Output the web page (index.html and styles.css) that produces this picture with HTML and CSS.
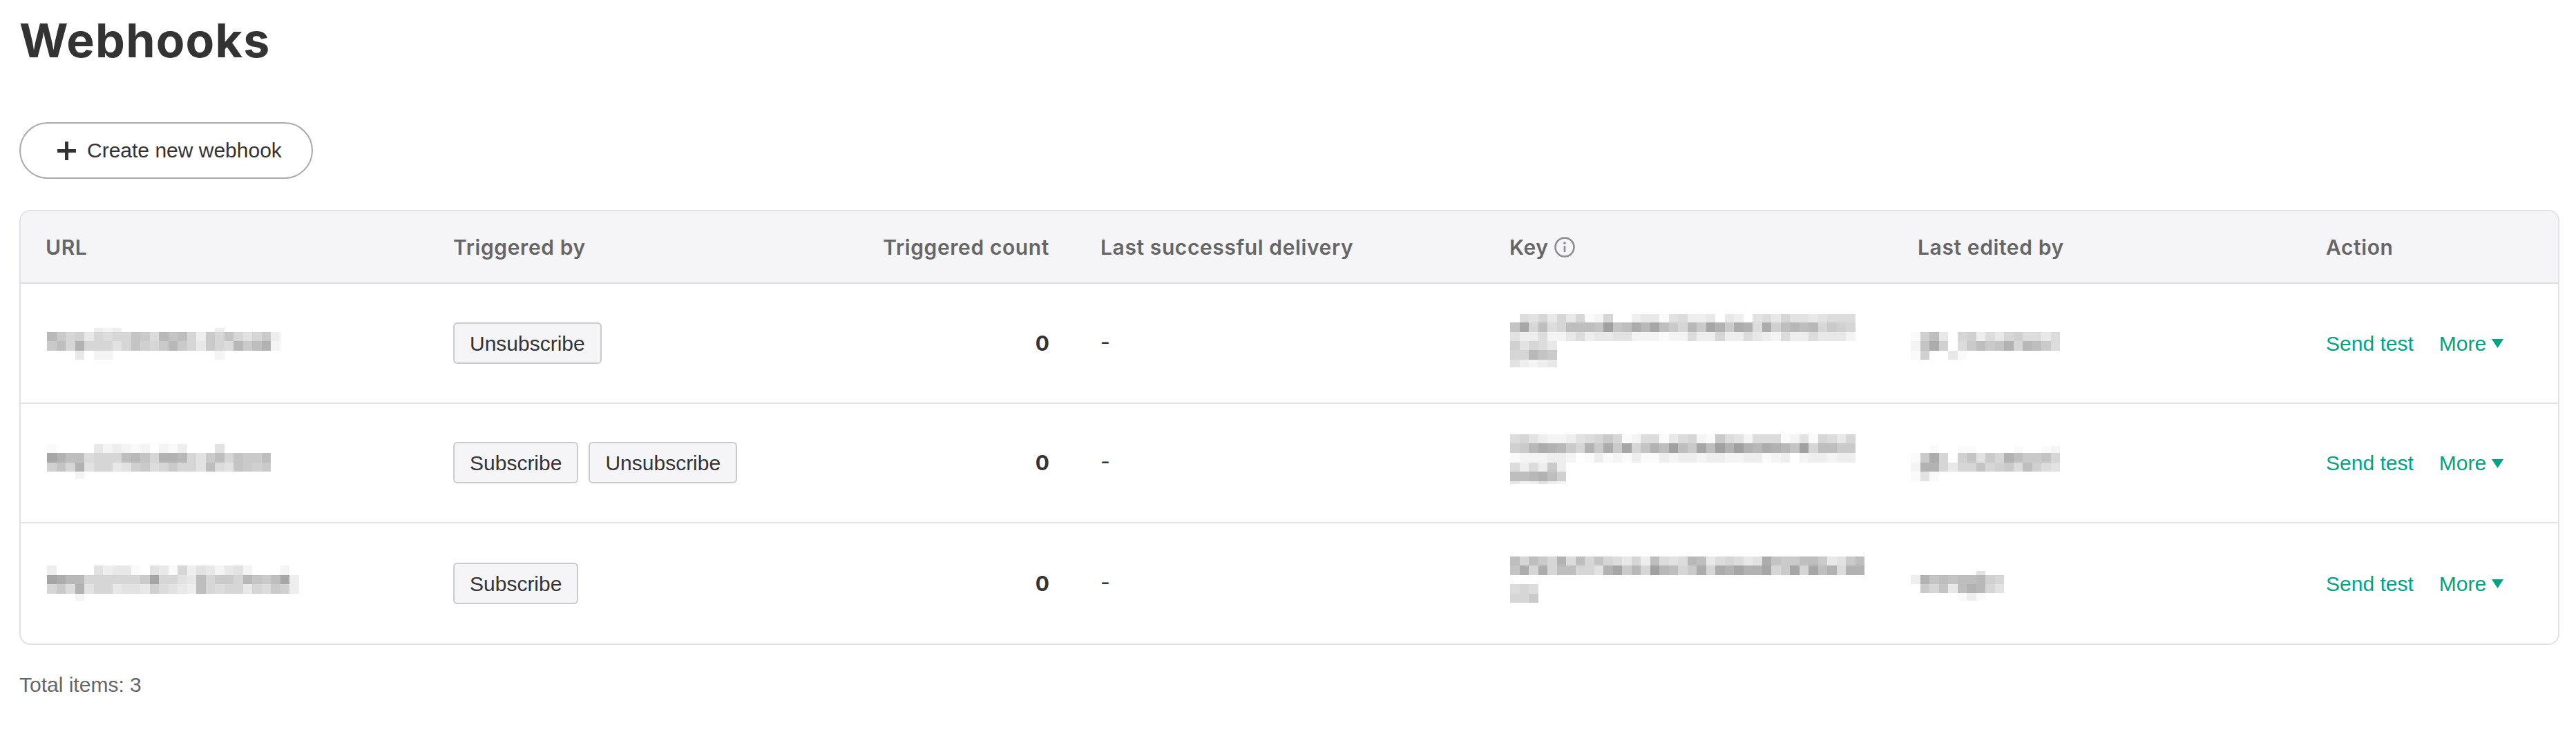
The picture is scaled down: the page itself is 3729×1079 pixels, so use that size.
FILE: index.html
```html
<!DOCTYPE html>
<html lang="en">
<head>
    <meta charset="UTF-8">
    <title>Webhooks</title>
    <link rel="stylesheet" href="styles.css">
</head>
<body>
    <h1>Webhooks</h1>

    <button class="create-btn">
        <svg class="plus-icon" viewBox="0 0 27 27"><path d="M13.5 0v27M0 13.5h27"/></svg>
        Create new webhook
    </button>

    <div class="table-wrap">
        <table>
            <colgroup>
                <col class="col-url">
                <col class="col-url">
                <col class="col-count">
                <col class="col-last">
                <col class="col-key">
                <col class="col-key">
                <col>
            </colgroup>
            <thead>
                <tr>
                    <th>URL</th>
                    <th>Triggered by</th>
                    <th class="right">Triggered count</th>
                    <th>Last successful delivery</th>
                    <th>
                        <span class="key-head">Key
                            <svg class="info-icon" viewBox="0 0 30 30">
                                <circle cx="15" cy="15" r="13.5"/>
                                <path d="M15 13v9"/>
                                <circle class="dot" cx="15" cy="9" r="1.8"/>
                            </svg>
                        </span>
                    </th>
                    <th>Last edited by</th>
                    <th>Action</th>
                </tr>
            </thead>
            <tbody>
                <tr>
                    <td><div class="pixelated pix-url" data-rows="3:|6:.....ded..........d......|13:4798c9a9967a46 59d7969b97d|14:759399 9b968 9747 9c79a47 53e|13:...c.ee...........e......"></div></td>
                    <td><span class="tag">Unsubscribe</span></td>
                    <td class="right count">0</td>
                    <td class="dash">-</td>
                    <td><div class="pixelated pix-key" data-rows="12:.ab9c9c9fe9..dccfbaddc.cd.bac9bbcbaaa|14:6195a955560652415794713723a2854549789|13:bddaeecadccbbeeefeeadd9ddacdeaddaccce|13:8b9ac|14:99467|11:bdedc|6:"></div></td>
                    <td><div class="pixelated pix-editor" data-rows="9:|13:f85c.98dac98aaca|14:e628.a757639457a|13:f8..cf"></div></td>
                    <td>
                        <div class="actions">
                            <a href="#">Send test</a>
                            <a href="#" class="more">More <svg class="caret" viewBox="0 0 17 13"><path d="M0 0h17L8.5 13z"/></svg></a>
                        </div>
                    </td>
                </tr>
                <tr>
                    <td><div class="pixelated pix-url" data-rows="13:f....cedefe.efd...b......|14:1355a99954693349b7596775|13:8693b99cb87a9799b5ab6787|11:...e|3:"></div></td>
                    <td><span class="tag">Subscribe</span><span class="tag">Unsubscribe</span></td>
                    <td class="right count">0</td>
                    <td class="dash">-</td>
                    <td><div class="pixelated pix-key" data-rows="13:a9bdeedba979feaafca9ef7abeaaafebf9ac9|14:8742347937271963505715030342346095577|14:feeedde.fdfefdffdeddeddeeddfed.eddedd|13:adad7d|14:554358|4:cedbde|10:"></div></td>
                    <td><div class="pixelated pix-editor" data-rows="3:|10:..f..ff....f..fe|14:f729.86b79357769|13:e339c996987a58ab|14:fbf"></div></td>
                    <td>
                        <div class="actions">
                            <a href="#">Send test</a>
                            <a href="#" class="more">More <svg class="caret" viewBox="0 0 17 13"><path d="M0 0h17L8.5 13z"/></svg></a>
                        </div>
                    </td>
                </tr>
                <tr>
                    <td><div class="pixelated pix-url" data-rows="14:d....bdccf.bcf9dbcecbe...e.|13:12449999997199bc5977946751d|14:97a3b99cbbc8abcd59a99c9a78d|10:...e"></div></td>
                    <td><span class="tag">Subscribe</span></td>
                    <td class="right count">0</td>
                    <td class="dash">-</td>
                    <td><div class="pixelated pix-key" data-rows="13:595793a5969ac9d5aba45ca9acb2677557cb75|14:629295599b3174904597292313319719153a33|13:|14:a9a|13:997|10:"></div></td>
                    <td><div class="pixelated pix-editor" data-rows="8:|6:.......b|13:d365655489|13:.796c5349b|11:.....fdf"></div></td>
                    <td>
                        <div class="actions">
                            <a href="#">Send test</a>
                            <a href="#" class="more">More <svg class="caret" viewBox="0 0 17 13"><path d="M0 0h17L8.5 13z"/></svg></a>
                        </div>
                    </td>
                </tr>
            </tbody>
        </table>
    </div>

    <p class="total">Total items: 3</p>

    <script src="pixels.js"></script>
</body>
</html>
```

FILE: styles.css
```css
body {
    margin: 0;
    padding: 0 24px 0 28px;
    font-family: "Liberation Sans", Arial, sans-serif;
    font-size: 30px;
    color: #333;
    background-color: #fff;
}

h1 {
    margin: 0;
    height: 177px;
    padding-top: 18px;
    box-sizing: border-box;
    font-family: Inter, sans-serif;
    font-size: 68px;
    line-height: 80px;
    font-weight: 700;
    letter-spacing: 1.2px;
    color: #333;
}

.create-btn {
    display: flex;
    align-items: center;
    gap: 16px;
    height: 82px;
    padding: 0 43px 0 53px;
    border: 2px solid #a9a9ae;
    border-radius: 41px;
    background-color: #fff;
    font-family: inherit;
    font-size: 30px;
    color: #333;
}

.plus-icon {
    width: 27px;
    height: 27px;
    fill: none;
    stroke: #333;
    stroke-width: 5;
}

.table-wrap {
    margin-top: 45px;
    border: 2px solid #e0e1e5;
    border-radius: 16px;
    overflow: hidden;
}

table {
    width: 100%;
    table-layout: fixed;
    border-collapse: separate;
    border-spacing: 0;
}

.col-url {
    width: 590px;
}

.col-count {
    width: 347px;
}

.col-last {
    width: 592px;
}

.col-key {
    width: 591px;
}

th {
    height: 105px;
    padding: 0 36px;
    box-sizing: border-box;
    text-align: left;
    font-family: Inter, sans-serif;
    font-size: 30px;
    font-weight: 600;
    letter-spacing: 0.6px;
    color: #666;
    background-color: #f5f5f8;
    border-bottom: 2px solid #dcdde1;
}

td {
    height: 173.6px;
    padding: 0 36px;
    box-sizing: border-box;
    border-bottom: 2px solid #e2e2e4;
}

tbody tr:last-child td {
    border-bottom: none;
}

th.right,
td.right {
    padding-right: 38px;
    text-align: right;
}

.count {
    font-family: Inter, sans-serif;
    font-weight: 700;
}

td.dash {
    padding-bottom: 4px;
    font-family: Inter, sans-serif;
}

.key-head {
    display: inline-flex;
    align-items: center;
    gap: 8px;
}

.info-icon {
    width: 30px;
    height: 30px;
    fill: none;
    stroke: #8b8b90;
    stroke-width: 2.6;
}

.info-icon .dot {
    fill: #8b8b90;
    stroke: none;
}

.pixelated svg {
    display: block;
}

.pix-url {
    margin-left: 2px;
}

.pix-key {
    margin-left: 1px;
}

.pix-editor {
    margin-left: -10px;
}

.tag {
    display: inline-block;
    height: 60px;
    line-height: 58px;
    padding: 0 22px;
    margin-right: 15px;
    box-sizing: border-box;
    border: 2px solid #c8cad0;
    border-radius: 6px;
    background-color: #f5f5f8;
    vertical-align: middle;
}

.actions {
    display: flex;
    align-items: center;
    gap: 37px;
    padding-top: 2px;
}

.actions a {
    color: #00a383;
    text-decoration: none;
    white-space: nowrap;
}

.more {
    display: inline-flex;
    align-items: center;
    gap: 8px;
}

.caret {
    width: 17px;
    height: 13px;
    fill: #00a383;
}

.total {
    margin: 41px 0 0;
    font-size: 30px;
    color: #666;
}
```

FILE: pixels.js
```js
// draws the blurred-out cells; each row is "height:cells", one hex digit per cell
var SVG_NS = "http://www.w3.org/2000/svg";
var CELL = 13.5;

function cellColor(ch) {
    var g = (160 + parseInt(ch, 16) * 6).toString(16);
    return "#" + g + g + g;
}

document.querySelectorAll(".pixelated").forEach(function (block) {
    var rows = block.getAttribute("data-rows").split("|");
    var svg = document.createElementNS(SVG_NS, "svg");
    var y = 0;
    var longest = 0;

    rows.forEach(function (row) {
        var parts = row.split(":");
        var h = parseInt(parts[0], 10);
        var cells = parts[1].replace(/ /g, "");
        longest = Math.max(longest, cells.length);
        for (var i = 0; i < cells.length; i++) {
            if (cells[i] === ".") continue;
            var rect = document.createElementNS(SVG_NS, "rect");
            rect.setAttribute("x", i * CELL);
            rect.setAttribute("y", y);
            rect.setAttribute("width", CELL);
            rect.setAttribute("height", h);
            rect.setAttribute("fill", cellColor(cells[i]));
            rect.setAttribute("shape-rendering", "crispEdges");
            svg.appendChild(rect);
        }
        y += h;
    });

    svg.setAttribute("width", longest * CELL);
    svg.setAttribute("height", y);
    block.appendChild(svg);
});
```
